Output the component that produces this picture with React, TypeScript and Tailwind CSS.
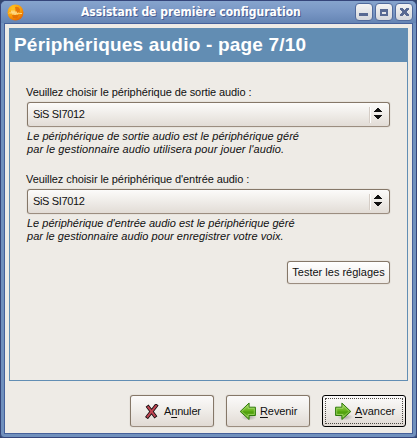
import type { ReactNode } from 'react';

function AppIcon() {
  return (
    <svg width="17" height="17" viewBox="0 0 17 17">
      <defs>
        <radialGradient id="orb" cx=".35" cy=".25" r=".85">
          <stop offset="0" stopColor="#ffc321" />
          <stop offset=".6" stopColor="#f99a08" />
          <stop offset="1" stopColor="#e05a00" />
        </radialGradient>
      </defs>
      <circle cx="8.5" cy="8.5" r="8" fill="url(#orb)" />
      <path d="M8 3q4-1 5 2.500l-.5 3H9zM5 11h7l-2 3.500-4-.5z" fill="#e06a04" opacity=".8" />
      <path d="M2 9.500l1-1 1 1 1-3 1 4 1-4 1 4.500 1-3.500 1 3 1-1.500 1.500.5h2.500" fill="none" stroke="#ffdf94" strokeWidth=".9" />
    </svg>
  );
}

function TitleButton({ children }: { children: ReactNode }) {
  return (
    <div className="h-[18px] w-[18px] rounded-[4px] border border-[#506a9c] bg-linear-to-b from-[#f4f4f4] to-[#d5d8dd]">
      <svg width="16" height="16" viewBox="0 0 16 16" shapeRendering="crispEdges">{children}</svg>
    </div>
  );
}

function Select({ value }: { value: string }) {
  return (
    <div className="flex h-[25px] items-center rounded-[3px] border border-[#857768] border-b-[#9b8d80] bg-linear-to-b from-[#fcfbfa] via-[#efece8] to-[#e2dcd6] pl-[5px] shadow-[0_0_0_1px_#e7e3dd]">
      <span className="flex-1 text-[11px] leading-[13px] tracking-[-0.34px]">{value}</span>
      <div className="h-[16px] w-px bg-[#d5cdc6]" />
      <div className="h-[16px] w-px bg-white" />
      <svg className="mr-[7px] mb-[2px] ml-[3px]" width="8" height="11" viewBox="0 0 8 11" shapeRendering="crispEdges">
        <path d="M3 0h2v1h1v1h1v1h1v1H0V3h1V2h1V1h1zM0 7h8v1H7v1H6v1H5v1H3v-1H2V9H1V8H0z" fill="#111" />
      </svg>
    </div>
  );
}

function Arrow({ flip = false }: { flip?: boolean }) {
  return (
    <svg width="18" height="19" viewBox="0 0 18 19">
      <defs>
        <linearGradient id="green" x2="0" y2="1">
          <stop offset="0" stopColor="#a8d568" />
          <stop offset=".45" stopColor="#68b51f" />
          <stop offset=".55" stopColor="#4e9f0b" />
          <stop offset="1" stopColor="#80c341" />
        </linearGradient>
        <radialGradient id="arrowShadow">
          <stop offset="0" stopColor="#000" stopOpacity=".28" />
          <stop offset="1" stopColor="#000" stopOpacity="0" />
        </radialGradient>
      </defs>
      <ellipse cx="10" cy="15" rx="8" ry="3.5" fill="url(#arrowShadow)" />
      <g transform={flip ? 'translate(17 0) scale(-1 1)' : undefined}>
        <path d="M.6 5.2h6.3V1L15.8 9.5 6.9 17.5v-4H.6z" fill="url(#green)" stroke="#2f7a0c" strokeWidth="1" />
        <path d="M1.7 6.3H8V3.5l6.3 6L8 15v-2.5H1.7z" fill="none" stroke="#b4df7c" strokeWidth=".8" opacity=".75" />
      </g>
    </svg>
  );
}

function Cross() {
  return (
    <svg width="14" height="15" viewBox="0 0 14 15">
      <path d="M3.2 3.2l6.6 8.6M11 1.8L2.6 12.6" stroke="#171012" strokeWidth="3.7" strokeLinecap="square" />
      <path d="M3.2 3.2l6.6 8.6M11 1.8L2.6 12.6" stroke="#c04552" strokeWidth="2" strokeLinecap="square" />
    </svg>
  );
}

const buttonBase =
  'flex h-[32px] w-[84px] items-center rounded-[3px] border bg-linear-to-b from-[#fbfafa] via-[#efece8] to-[#e1dad4] text-[11px] leading-[13px]';
const plainEdge = ' border-[#857768] border-b-[#9b8d80] shadow-[0_0_0_1px_#e7e3dd]';

function Key({ children }: { children: string }) {
  return <span className="underline decoration-1 underline-offset-2">{children}</span>;
}

export default function App() {
  return (
    <div className="h-[438px] w-[417px] bg-[#33466f] font-['Liberation_Sans',Arial,sans-serif] text-[#101010]">
      <div className="flex h-[438px] flex-col overflow-hidden rounded-t-[6px] rounded-b-[4px] border border-[#35457a] bg-[#7090bd]">
        <div className="flex h-[22px] shrink-0 items-center bg-linear-to-b from-[#86a4cd] via-[#7896c4] to-[#6585b4] pr-[3px] pl-[6px]">
          <AppIcon />
          <div className="flex-1 pl-[57px] font-['DejaVu_Sans_Condensed','DejaVu_Sans',sans-serif] text-[12px] leading-[14px] font-bold whitespace-nowrap text-white">
            <span className="[text-shadow:1px_1px_0_#4a5f92]">Assistant de première configuration</span>
          </div>
          <div className="flex gap-[2px]">
            <TitleButton><path d="M3 9h9v3H3z" fill="#586a93" /></TitleButton>
            <TitleButton><path d="M4 5h8v7H4zM6 8v2h4V8z" fillRule="evenodd" fill="#586a93" /></TitleButton>
            <TitleButton><path d="M4 4h3v1h1v1h1V5h1V4h3v2h-1v1h-1v2h1v1h1v2h-3v-1H9v-1H8v1H7v1H4v-2h1V9h1V7H5V6H4z" fill="#586a93" /></TitleButton>
          </div>
        </div>
        <div className="mx-[3px] mb-[3px] flex flex-1 flex-col border border-[#45609a] bg-[#eeebe6] px-[4px] pt-[4px]">
          <div className="flex h-[353px] flex-col border border-[#628eb4]">
            <div className="h-[33px] bg-[#628db3] pl-[4px] text-[19px] leading-[31px] font-bold tracking-[0.2px] whitespace-nowrap text-white">
              Périphériques audio - page 7/10
            </div>
            <div className="flex flex-col pr-[17px] pl-[17px] text-[11px] leading-[13px] whitespace-nowrap">
              <p className="mt-[24px] mb-[3px] -ml-px tracking-[-0.09px]">Veuillez choisir le périphérique de sortie audio :</p>
              <Select value="SiS SI7012" />
              <p className="mt-[3px] tracking-[0.03px] italic">Le périphérique de sortie audio est le périphérique géré</p>
              <p className="tracking-[0.1px] italic">par le gestionnaire audio utilisera pour jouer l'audio.</p>
              <p className="mt-[17px] mb-[3px] -ml-px tracking-[-0.08px]">Veuillez choisir le périphérique d'entrée audio :</p>
              <Select value="SiS SI7012" />
              <p className="mt-[3px] italic">Le périphérique d'entrée audio est le périphérique géré</p>
              <p className="tracking-[0.04px] italic">par le gestionnaire audio pour enregistrer votre voix.</p>
              <button className="mt-[18px] flex h-[23px] w-[103px] items-center justify-center self-end rounded-[3px] border border-[#857768] border-b-[#9b8d80] bg-linear-to-b from-white to-[#eeeae6] shadow-[0_0_0_1px_#e7e3dd]">
                Tester les réglages
              </button>
            </div>
          </div>
          <div className="mt-[14px] flex justify-end gap-[12px] pr-[2px]">
            <button className={buttonBase + plainEdge}>
              <span className="mr-[5px] ml-[14px]"><Cross /></span>
              <span className="tracking-[-0.15px]">A<Key>n</Key>nuler</span>
            </button>
            <button className={buttonBase + plainEdge}>
              <span className="mr-[3px] ml-[12px]"><Arrow flip /></span>
              <span className="tracking-[-0.1px]"><Key>R</Key>evenir</span>
            </button>
            <button className={buttonBase + ' border-black p-[2px]'}>
              <span className="flex h-full w-full items-center border border-dotted border-[#4c4944]">
                <span className="mr-[2px] ml-[9px]"><Arrow /></span>
                <span><Key>A</Key>vancer</span>
              </span>
            </button>
          </div>
        </div>
      </div>
    </div>
  );
}
